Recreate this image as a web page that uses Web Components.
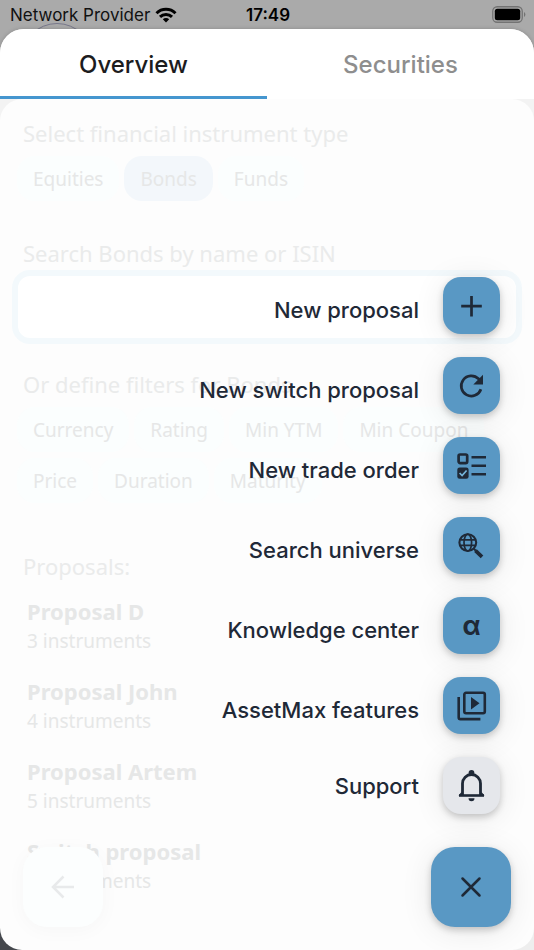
<!DOCTYPE html>
<html lang="en">
<head>
<meta charset="utf-8">
<meta name="viewport" content="width=device-width, initial-scale=1">
<title>Proposals</title>
<style>
  body {
    margin: 0;
    font-family: "Inter", "Liberation Sans", sans-serif;
    --accent: #5998c4;
    --ink: #1f2937;
    --faded: #e6e7e7;
    --content-font: "Noto Sans", "Open Sans", sans-serif;
  }
</style>
</head>
<body>
<proposals-app></proposals-app>

<script>
class StatusBar extends HTMLElement {
  constructor(){
    super();
    this.attachShadow({mode: "open"});
  }

  static get styles(){
    return /* css */`
      :host {
        display: grid;
        grid-template-columns: 1fr auto 1fr;
        align-items: center;
        height: 29px;
        padding: 0 8px 0 10px;
        font-size: 17px;
        line-height: 29px;
        color: #111;
      }

      .carrier {
        display: flex;
        align-items: center;
        gap: 5px;
      }

      .carrier span,
      .time {
        padding-top: 2px;
        line-height: 27px;
      }

      .time {
        font-weight: 600;
        color: #000;
      }

      .battery {
        justify-self: end;
      }

      svg {
        display: block;
      }
    `
  }

  connectedCallback() {
    this.render();
  }

  render() {
    this.shadowRoot.innerHTML = /* html */`
    <style>${StatusBar.styles}</style>
    <div class="carrier">
      <span>Network Provider</span>
      <svg width="22" height="16" viewBox="0 0 22 16" fill="none" stroke="#000" stroke-width="3">
        <path d="M1.5 6.200a13.500 13.500 0 0 1 19 0"/>
        <path d="M5 9.900a8.600 8.600 0 0 1 12 0"/>
        <path d="M11 15.500l-3.200-3.300a4.600 4.600 0 0 1 6.400 0z" fill="#000" stroke="none"/>
      </svg>
    </div>
    <span class="time">17:49</span>
    <svg class="battery" width="34" height="17" viewBox="0 0 34 17">
      <rect x=".75" y=".75" width="29.500" height="15.500" rx="4.500" fill="none" stroke="#737373" stroke-width="1.300"/>
      <rect x="2.800" y="2.800" width="25.400" height="11.400" rx="2.500"/>
      <path d="M32 6a3 3 0 0 1 0 5z" fill="#737373"/>
    </svg>
    `
  }
}

class TabBar extends HTMLElement {
  constructor(){
    super();
    this.attachShadow({mode: "open"});
  }

  static get styles(){
    return /* css */`
      :host {
        display: block;
        background: #fff;
      }

      .tabs {
        display: grid;
        grid-template-columns: 1fr 1fr;
      }

      button {
        height: 70px;
        padding: 4px 0 0;
        border: 0;
        border-bottom: 3px solid transparent;
        background: none;
        font: 500 24px/30px "Inter", sans-serif;
        color: #8e8e8e;
        cursor: pointer;
      }

      button[aria-selected="true"] {
        color: #1c1c1e;
        border-color: #4596cf;
      }
    `
  }

  connectedCallback() {
    this.render();
  }

  render() {
    this.shadowRoot.innerHTML = /* html */`
    <style>${TabBar.styles}</style>
    <div class="tabs" role="tablist">
      <button role="tab" aria-selected="true">Overview</button>
      <button role="tab" aria-selected="false">Securities</button>
    </div>
    `
  }
}

class FilterChip extends HTMLElement {
  constructor(){
    super();
    this.attachShadow({mode: "open"});
  }

  static get styles(){
    return /* css */`
      :host {
        display: block;
      }

      button {
        height: 45px;
        padding: 0 16px;
        border: 0;
        border-radius: 18px;
        background: #fbfefe;
        font: 400 19px/28px var(--content-font);
        color: var(--faded);
        cursor: pointer;
      }

      :host([selected]) button {
        background: #f3f7fb;
      }
    `
  }

  connectedCallback() {
    this.render();
  }

  render() {
    this.shadowRoot.innerHTML = /* html */`
    <style>${FilterChip.styles}</style>
    <button type="button" aria-pressed="${this.hasAttribute("selected")}"><slot></slot></button>
    `
  }
}

class ProposalItem extends HTMLElement {
  constructor(){
    super();
    this.attachShadow({mode: "open"});
  }

  static get styles(){
    return /* css */`
      :host {
        display: block;
        color: var(--faded);
      }

      h3, p {
        margin: 0;
      }

      h3 {
        margin-bottom: 4px;
        font-size: 22px;
        font-weight: 700;
        line-height: 24px;
      }

      p {
        font-size: 19px;
        line-height: 28px;
      }
    `
  }

  connectedCallback() {
    this.render();
  }

  render() {
    this.shadowRoot.innerHTML = /* html */`
    <style>${ProposalItem.styles}</style>
    <h3><slot></slot></h3>
    <p>${this.getAttribute("count")} instruments</p>
    `
  }
}

class OverviewPanel extends HTMLElement {
  constructor(){
    super();
    this.attachShadow({mode: "open"});
  }

  static get styles(){
    return /* css */`
      :host {
        display: block;
        padding: 19px 12px 24px;
        border-radius: 22px;
        background: #fdfdfd;
        font-family: var(--content-font);
      }

      h2, label {
        display: block;
        margin: 0;
        padding: 0 0 2px 11px;
        font-size: 22px;
        font-weight: 400;
        line-height: 30px;
        color: #eaebeb;
      }

      .chips {
        display: flex;
        flex-wrap: wrap;
        gap: 6px 5px;
        padding: 6px 5px 0;
      }

      .search {
        margin: 37px 0 25px;
      }

      input {
        display: block;
        box-sizing: border-box;
        width: 100%;
        height: 74px;
        padding: 0 16px;
        border: 6px solid #f3f9fc;
        border-radius: 18px;
        background: #fff;
        font: 400 22px/32px var(--content-font);
        color: var(--faded);
        outline: none;
      }

      .proposals {
        margin-top: 48px;
      }

      .list {
        display: grid;
        gap: 24px;
        padding: 16px 15px 0;
      }
    `
  }

  connectedCallback() {
    this.render();
  }

  render() {
    this.shadowRoot.innerHTML = /* html */`
    <style>${OverviewPanel.styles}</style>
    <section>
      <h2>Select financial instrument type</h2>
      <div class="chips">
        <filter-chip>Equities</filter-chip>
        <filter-chip selected>Bonds</filter-chip>
        <filter-chip>Funds</filter-chip>
      </div>
    </section>
    <section class="search">
      <label for="query">Search Bonds by name or ISIN</label>
      <input id="query" type="text">
    </section>
    <section>
      <h2>Or define filters for Bonds</h2>
      <div class="chips">
        <filter-chip>Currency</filter-chip>
        <filter-chip>Rating</filter-chip>
        <filter-chip>Min YTM</filter-chip>
        <filter-chip>Min Coupon</filter-chip>
        <filter-chip>Price</filter-chip>
        <filter-chip>Duration</filter-chip>
        <filter-chip>Maturity</filter-chip>
      </div>
    </section>
    <section class="proposals">
      <h2>Proposals:</h2>
      <div class="list">
        <proposal-item count="3">Proposal D</proposal-item>
        <proposal-item count="4">Proposal John</proposal-item>
        <proposal-item count="5">Proposal Artem</proposal-item>
        <proposal-item count="4">Switch proposal</proposal-item>
      </div>
    </section>
    `
  }
}

class FabButton extends HTMLElement {
  constructor(){
    super();
    this.attachShadow({mode: "open"});
  }

  static get styles(){
    return /* css */`
      :host {
        display: block;
        --fill: var(--accent);
      }

      button {
        display: grid;
        place-items: center;
        width: 80px;
        height: 80px;
        padding: 0;
        border: 0;
        border-radius: 24px;
        background: var(--fill);
        color: var(--ink);
        box-shadow: 0 3px 7px rgba(0, 0, 0, 0.2), 0 4px 32px rgba(0, 0, 0, 0.09);
        cursor: pointer;
      }

      :host([faded]) {
        --fill: #fcfefe;
      }

      :host([faded]) button {
        color: #e8eaeb;
        box-shadow: 0 3px 20px rgba(0, 0, 0, 0.03);
      }
    `
  }

  connectedCallback() {
    this.render();
  }

  render() {
    this.shadowRoot.innerHTML = /* html */`
    <style>${FabButton.styles}</style>
    <button type="button" aria-label="${this.getAttribute("label")}"><slot></slot></button>
    `
  }
}

const icons = {
  plus: `<svg width="31" height="32" viewBox="0 0 31 32" fill="none" stroke="currentColor" stroke-width="2.700"><path d="M15.500 6v20.500M5.200 16.200h20.600"/></svg>`,
  refresh: `<svg width="31" height="32" viewBox="0 0 31 32" fill="none" stroke="currentColor" stroke-width="2.700"><path d="M24.900 19.200a10.100 10.100 0 1 1-2.400-10.400l2 2"/><path d="M27 4.800v9.700h-9.700z" fill="currentColor" stroke="none"/></svg>`,
  checklist: `<svg width="31" height="32" viewBox="0 0 31 32" fill="none" stroke="currentColor" stroke-width="2.700"><rect x="2.600" y="4.500" width="8.600" height="8.600" rx="1.500"/><path d="M15.500 7.200h14.500M15.500 15.700h14.500M15.500 24.200h14.500" stroke-width="2.600"/><rect x="1.300" y="17.500" width="11.300" height="11.300" rx="2.300" fill="currentColor" stroke="none"/><path d="M3.600 23l2.500 2.500 4.500-5" stroke="#75b5dc" stroke-width="1.700"/></svg>`,
  globe: `<svg width="31" height="32" viewBox="0 0 31 32" fill="none" stroke="currentColor" stroke-width="1.700"><circle cx="11.800" cy="12.600" r="8.400" stroke-width="2.100"/><ellipse cx="11.800" cy="12.600" rx="3.800" ry="8.400"/><path d="M4.500 9.800h14.600M4.500 15.400h14.600"/><path d="M18 18.900l1.800 1.800" stroke-width="2"/><path d="M19.500 20.600l6.500 6.300" stroke-width="3.700"/></svg>`,
  library: `<svg width="31" height="32" viewBox="0 0 31 32" fill="none" stroke="currentColor" stroke-width="2.600"><rect x="8.300" y="2.800" width="20.500" height="20.500" rx="1.700"/><path d="M2.700 7v20.400q0 1.700 1.700 1.700h20"/><path d="M15 7v12.500l8.500-6.250z" fill="currentColor" stroke="none"/></svg>`,
  bell: `<svg width="31" height="33" viewBox="0 0 31 33" fill="none" stroke="currentColor" stroke-width="2.800"><path d="M6.500 26.500V14.500a9 9 0 0 1 18 0V26.500"/><path d="M3 26.500h25" stroke-width="2.600"/><path d="M5.500 23l-3 3.500h4zM25.500 23l3 3.500h-4z" fill="currentColor" stroke="none"/><circle cx="15.500" cy="4" r="2.900" fill="currentColor" stroke="none"/><path d="M12.500 29.200h6a3 3 0 0 1-6 0z" fill="currentColor" stroke="none"/></svg>`,
  close: `<svg width="32" height="32" viewBox="0 0 32 32" fill="none" stroke="currentColor" stroke-width="2.500" stroke-linecap="round"><path d="M7.500 7.500l17 17M24.500 7.500l-17 17"/></svg>`,
  back: `<svg width="32" height="32" viewBox="0 0 32 32" fill="none" stroke="currentColor" stroke-width="2.500"><path d="M27 16H7M16.500 5.500L6 16l10.500 10.500"/></svg>`
};

class DialItem extends HTMLElement {
  constructor(){
    super();
    this.attachShadow({mode: "open"});
  }

  static get styles(){
    return /* css */`
      :host {
        display: block;
      }

      button {
        display: flex;
        align-items: center;
        gap: 24px;
        padding: 0;
        border: 0;
        background: none;
        font: 500 22px/28px "Inter", sans-serif;
        color: var(--ink);
        cursor: pointer;
      }

      .label {
        padding-top: 8px;
      }

      .tile {
        display: grid;
        place-items: center;
        width: 57px;
        height: 57px;
        border-radius: 18px;
        background: var(--accent);
        box-shadow: 0 3px 7px rgba(0, 0, 0, 0.2), 0 4px 32px rgba(0, 0, 0, 0.09);
      }

      .glyph {
        font-size: 26px;
        font-weight: 700;
      }

      :host([muted]) .tile {
        background: #e5e7eb;
      }

      :host([muted]) .label {
        padding-top: 0;
      }
    `
  }

  connectedCallback() {
    this.render();
  }

  render() {
    const name = this.getAttribute("icon");
    this.shadowRoot.innerHTML = /* html */`
    <style>${DialItem.styles}</style>
    <button type="button">
      <span class="label"><slot></slot></span>
      <span class="tile">${icons[name] || `<span class="glyph">α</span>`}</span>
    </button>
    `
  }
}

class SpeedDial extends HTMLElement {
  constructor(){
    super();
    this.attachShadow({mode: "open"});
  }

  static get styles(){
    return /* css */`
      :host {
        display: flex;
        flex-direction: column;
        align-items: flex-end;
        gap: 33px;
      }

      nav {
        display: flex;
        flex-direction: column;
        align-items: flex-end;
        gap: 23px;
        padding-right: 11px;
      }
    `
  }

  connectedCallback() {
    this.render();
  }

  render() {
    this.shadowRoot.innerHTML = /* html */`
    <style>${SpeedDial.styles}</style>
    <nav>
      <dial-item icon="plus">New proposal</dial-item>
      <dial-item icon="refresh">New switch proposal</dial-item>
      <dial-item icon="checklist">New trade order</dial-item>
      <dial-item icon="globe">Search universe</dial-item>
      <dial-item icon="alpha">Knowledge center</dial-item>
      <dial-item icon="library">AssetMax features</dial-item>
      <dial-item icon="bell" muted>Support</dial-item>
    </nav>
    <fab-button label="Close">${icons.close}</fab-button>
    `
  }
}

class ProposalsApp extends HTMLElement {
  constructor(){
    super();
    this.attachShadow({mode: "open"});
  }

  static get styles(){
    return /* css */`
      :host {
        position: relative;
        display: flex;
        flex-direction: column;
        min-height: 100vh;
        overflow: hidden;
        background: #aaa;
      }

      .avatar {
        position: absolute;
        top: 23px;
        left: 21px;
        box-sizing: border-box;
        width: 72px;
        height: 72px;
        border: 1px solid #77778a;
        border-radius: 50%;
      }

      .sheet {
        position: relative;
        display: flex;
        flex-direction: column;
        flex: 1;
        border-radius: 24px 24px 0 0;
        overflow: hidden;
        box-shadow: 0 0 4px rgba(0, 0, 0, 0.2);
        background: linear-gradient(to right, #45484d 50%, #eee 50%) bottom / 100% 30px no-repeat, #f3f3f3;
      }

      overview-panel {
        flex: 1;
      }

      .back,
      speed-dial {
        position: absolute;
        bottom: 23px;
      }

      .back {
        left: 23px;
      }

      speed-dial {
        right: 23px;
      }
    `
  }

  connectedCallback() {
    this.render();
  }

  render() {
    this.shadowRoot.innerHTML = /* html */`
    <style>${ProposalsApp.styles}</style>
    <div class="avatar"></div>
    <status-bar></status-bar>
    <main class="sheet">
      <tab-bar></tab-bar>
      <overview-panel></overview-panel>
      <fab-button class="back" label="Back" faded>${icons.back}</fab-button>
      <speed-dial></speed-dial>
    </main>
    `
  }
}

customElements.define('status-bar', StatusBar);
customElements.define('tab-bar', TabBar);
customElements.define('filter-chip', FilterChip);
customElements.define('proposal-item', ProposalItem);
customElements.define('overview-panel', OverviewPanel);
customElements.define('fab-button', FabButton);
customElements.define('dial-item', DialItem);
customElements.define('speed-dial', SpeedDial);
customElements.define('proposals-app', ProposalsApp);
</script>
</body>
</html>
